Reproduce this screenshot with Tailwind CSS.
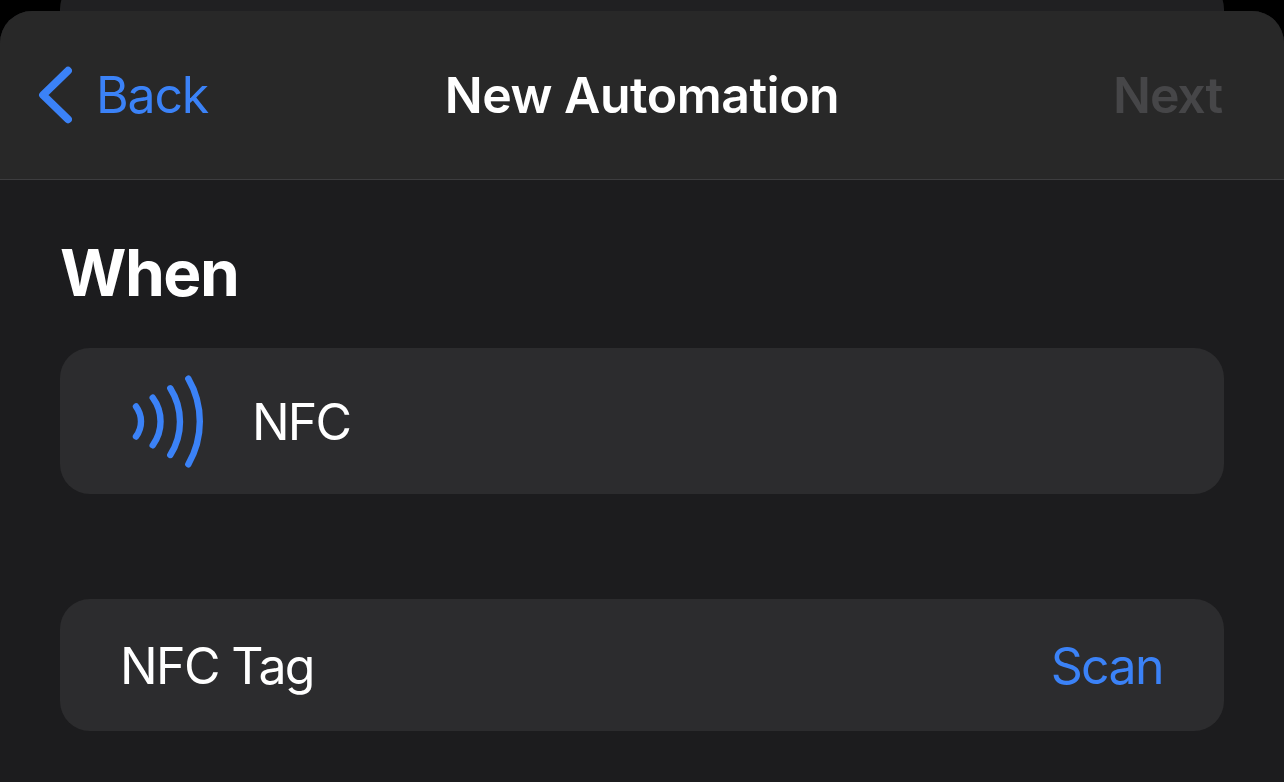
<!DOCTYPE html>
<html lang="en">
  <head>
    <meta charset="UTF-8" />
    <meta name="viewport" content="width=device-width, initial-scale=1.0" />
    <title>New Automation</title>
    <script src="https://cdn.jsdelivr.net/npm/@tailwindcss/browser@4"></script>
  </head>
  <body class="h-screen overflow-hidden bg-black font-['Inter',sans-serif] text-[50px] leading-[60px] text-white">
    <div class="flex h-full flex-col overflow-hidden">
      <!-- Sheet behind -->
      <div class="mx-[60px] -mt-[21px] h-[32px] shrink-0 rounded-t-[30px] bg-[#202022]"></div>

      <!-- Sheet -->
      <div class="flex-1 overflow-hidden rounded-t-[32px] bg-[#1c1c1e]">
        <header class="grid h-[169px] grid-cols-3 items-center border-b border-[#3d3d3f] bg-[#282828]">
          <button class="flex items-center pl-[38px] text-left text-[#3b82f7]">
            <svg class="h-[58px] w-[34px]" viewBox="0 0 34 58" fill="none" stroke="currentColor" stroke-width="7.8" stroke-linecap="round" stroke-linejoin="round">
              <path d="M30 4.7 L5 29 L30 53.3" />
            </svg>
            <span class="ml-[24px] tracking-[-1.2px]">Back</span>
          </button>
          <h1 class="text-center font-semibold tracking-[-0.5px] whitespace-nowrap">New Automation</h1>
          <button class="pr-[62px] text-right font-semibold tracking-[-1.1px] text-[#464648]">Next</button>
        </header>

        <main class="px-[60px]">
          <h2 class="mt-[57px] text-[64px] leading-[72px] font-bold tracking-[-1.5px]">When</h2>
          <div class="mt-[39px] flex h-[146px] items-center rounded-[30px] bg-[#2c2c2e] pl-[72px]">
            <svg class="h-[94px] w-[74px] text-[#3b82f7]" viewBox="0 0 74 94" fill="none" stroke="currentColor" stroke-width="6.4" stroke-linecap="round">
              <path d="M4 32.5 A25 25 0 0 1 4 62.5" />
              <path d="M20.7 23.7 A40 40 0 0 1 20.7 71.3" />
              <path d="M38.3 14.3 A62.3 62.3 0 0 1 38.3 81" />
              <path d="M56.3 4.7 A85.4 85.4 0 0 1 56.3 90.3" />
            </svg>
            <span class="mt-[2px] ml-[46px] tracking-[-1.8px]">NFC</span>
          </div>

          <div class="mt-[105px] flex h-[132px] items-center justify-between rounded-[30px] bg-[#2c2c2e] pt-[2px] pr-[61px] pl-[60px]">
            <span class="tracking-[-1.6px]">NFC Tag</span>
            <button class="tracking-[-1.6px] text-[#3b82f7]">Scan</button>
          </div>
        </main>
      </div>
    </div>
  </body>
</html>
